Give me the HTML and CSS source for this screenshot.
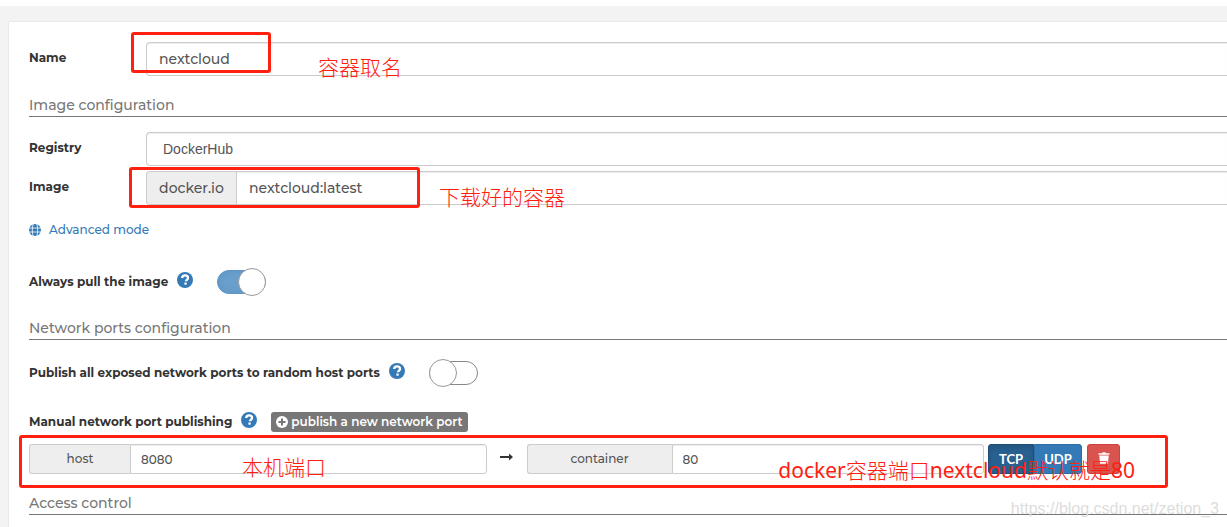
FILE: index.html
```html
<!DOCTYPE html>
<html lang="en">
  <head>
    <meta charset="UTF-8">
    <meta name="viewport" content="width=device-width, initial-scale=1">
    <title>Create container</title>
    <link rel="stylesheet" href="styles.css">
  </head>
  <body>
    <svg class="sprite" aria-hidden="true">
      <symbol id="icon-question" viewBox="0 0 16 16">
        <circle cx="8" cy="8" r="8" fill="currentColor"/>
        <path d="M5.2 6.1C5.2 4.3 6.4 3.4 8.1 3.4c1.7 0 2.9 1 2.9 2.5 0 2-2 2-2 3.4" fill="none" stroke="#fff" stroke-width="2.3"/>
        <path d="M7.4 10.500h2.300v2.200H7.400z" fill="#fff"/>
      </symbol>
    </svg>
    <main class="page">
      <form class="widget">
        <div class="form-row marked">
          <label for="name">Name</label>
          <input id="name" class="form-control" type="text" value="nextcloud">
          <span class="mark mark-name"></span>
          <span class="note note-name" lang="zh">容器取名</span>
        </div>

        <h2 class="form-section-title">Image configuration</h2>
        <div class="form-row registry">
          <label for="registry">Registry</label>
          <select id="registry" class="form-control">
            <option>DockerHub</option>
          </select>
        </div>
        <div class="form-row image marked">
          <label for="image">Image</label>
          <div class="input-group">
            <span class="addon">docker.io</span>
            <input id="image" class="form-control" type="text" value="nextcloud:latest">
          </div>
          <span class="mark mark-image"></span>
          <span class="note note-image" lang="zh">下载好的容器</span>
        </div>
        <a class="advanced" href="#">
          <svg width="12" height="12" viewBox="0 0 12 12" aria-hidden="true">
            <circle cx="6" cy="6" r="6" fill="currentColor"/>
            <path d="M0 4h12M0 8h12M4.2 0C3 3.600 3 8.400 4.200 12M7.800 0C9 3.600 9 8.400 7.800 12" fill="none" stroke="#fff" stroke-width=".8"/>
          </svg>
          Advanced mode
        </a>

        <div class="toggle-row pull">
          <label for="pull">Always pull the image</label>
          <svg class="help" aria-hidden="true"><use href="#icon-question"/></svg>
          <input id="pull" class="switch" type="checkbox" checked>
        </div>

        <h2 class="form-section-title network">Network ports configuration</h2>
        <div class="toggle-row publish">
          <label for="publish">Publish all exposed network ports to random host ports</label>
          <svg class="help" aria-hidden="true"><use href="#icon-question"/></svg>
          <input id="publish" class="switch" type="checkbox">
        </div>
        <div class="manual">
          <span class="manual-label">Manual network port publishing</span>
          <svg class="help" aria-hidden="true"><use href="#icon-question"/></svg>
          <button class="publish-port" type="button">
            <svg width="12" height="12" viewBox="0 0 12 12" aria-hidden="true">
              <circle cx="6" cy="6" r="6" fill="#fff"/>
              <path d="M6 2.500v7M2.500 6h7" stroke="#777" stroke-width="2"/>
            </svg>
            publish a new network port
          </button>
        </div>

        <div class="ports marked">
          <div class="input-group small host">
            <label class="addon" for="host">host</label>
            <input id="host" class="form-control" type="text" value="8080">
          </div>
          <svg class="arrow" viewBox="0 0 13 8" aria-hidden="true">
            <path d="M0 3h9V.5L13 4 9 7.500V5H0z" fill="#333"/>
          </svg>
          <div class="input-group small container">
            <label class="addon" for="container">container</label>
            <input id="container" class="form-control" type="text" value="80">
          </div>
          <div class="protocols">
            <button class="btn active" type="button">TCP</button>
            <button class="btn" type="button">UDP</button>
          </div>
          <button class="btn btn-danger" type="button" aria-label="Remove port">
            <svg width="12" height="12" viewBox="0 0 12 12" aria-hidden="true">
              <path d="M.5 1.200h3.700L4.600.2h2.800l.4 1h3.700v1.600H.5zM1.300 3.500h9.400L10 11.800H2z" fill="#fff"/>
            </svg>
          </button>
          <span class="mark mark-ports"></span>
          <span class="note note-host" lang="zh">本机端口</span>
          <span class="note note-container" lang="zh"><b>docker</b>容器端口<b>nextcloud</b>默认就是<b>80</b></span>
        </div>

        <h2 class="form-section-title">Access control</h2>
      </form>
      <span class="watermark">https://blog.csdn.net/zetion_3</span>
    </main>
  </body>
</html>
```
FILE: styles.css
```css
* {
  box-sizing: border-box;
}

body {
  margin: 0;
  background: #fff;
  color: #333;
  font: 500 12px/18px Montserrat, Inter, sans-serif;
}

input, select, button {
  font: inherit;
}

.sprite {
  position: absolute;
  width: 0;
  height: 0;
}

.page {
  position: relative;
  margin-top: 6px;
  padding: 15px 0 0 8px;
  min-height: calc(100vh - 6px);
  background: #f3f3f3;
  overflow: hidden;
}

/* The panel runs on past the right edge of the window */
.widget {
  min-height: calc(100vh - 21px);
  padding: 20px 0 0 20px;
  border: 1px solid #e9e9e9;
  border-right: 0;
  border-bottom: 0;
  border-radius: 2px 0 0 0;
  background: #fff;
}

.form-row {
  display: grid;
  grid-template-columns: 117px 1fr;
  align-items: start;
}
.form-row > label {
  padding-top: 7px;
}
label, .manual-label {
  font-weight: 700;
}

.form-control {
  width: 100%;
  height: 34px;
  padding: 0 12px;
  border: 1px solid #ccc;
  border-right: 0;
  border-radius: 4px 0 0 4px;
  background: #fff;
  color: #555;
  font-size: 14px;
  box-shadow: inset 0 1px 1px rgba(0, 0, 0, .075);
  appearance: none;
  outline: none;
}
select.form-control {
  padding-left: 16px;
  font-family: "Liberation Sans", Arial, sans-serif;
  font-weight: 400;
}

.input-group {
  display: flex;
  min-width: 0;
}
.input-group .form-control {
  flex: 1;
  min-width: 0;
  border-radius: 0;
}
.addon {
  flex: none;
  width: 90px;
  border: 1px solid #ccc;
  border-right: 0;
  border-radius: 4px 0 0 4px;
  background: #eee;
  color: #555;
  font-size: 14px;
  font-weight: 500;
  line-height: 32px;
  text-align: center;
}

.form-section-title {
  margin: 18px 0 15px;
  padding: 1px 0;
  border-bottom: 1px solid #777;
  color: #777;
  font-size: 14px;
  font-weight: 500;
  line-height: 20px;
}
.form-section-title.network {
  margin: 22px 0 20px;
}
.registry {
  margin-bottom: 5px;
}

.advanced {
  display: flex;
  align-items: center;
  gap: 8px;
  width: max-content;
  margin-top: 16px;
  color: #337ab7;
  text-decoration: none;
}

.toggle-row, .manual {
  display: flex;
  align-items: center;
}
.pull {
  margin-top: 30px;
}
.help {
  width: 16px;
  height: 16px;
  margin: 0 0 4px 9px;
  color: #337ab7;
}

.switch {
  appearance: none;
  display: flex;
  align-items: center;
  width: 49px;
  height: 24px;
  margin: 0 0 0 24px;
  border: 1px solid #888;
  border-radius: 12px;
  background: #fff;
}
.switch::before {
  content: "";
  flex: none;
  width: 26px;
  height: 26px;
  margin-left: -1px;
  border: 1px solid #999;
  border-radius: 50%;
  background: #fff;
}
.switch:checked {
  justify-content: flex-end;
  border-color: #5f96c4;
  background: #6a9fcb;
  box-shadow: inset 0 0 6px #5a93c5;
}
.switch:checked::before {
  margin-right: -1px;
}

.toggle-row {
  height: 26px;
}
.manual {
  height: 20px;
  margin: 26px 0 12px;
}
.publish-port {
  display: flex;
  align-items: center;
  gap: 3px;
  height: 20px;
  margin-left: 14px;
  padding: 0 5px;
  border: 0;
  border-radius: 3px;
  background: #777;
  color: #fff;
  font-weight: 600;
}

.ports {
  display: grid;
  grid-template-columns: 1fr 40px 1fr auto auto;
  padding-right: 107px;
}
.small .form-control {
  height: 30px;
  padding: 0 10px;
  border-right: 1px solid #ccc;
  border-radius: 0 3px 3px 0;
  font-size: 12px;
}
.small .addon {
  width: 101px;
  border-radius: 3px 0 0 3px;
  font-size: 12px;
  line-height: 28px;
}
.container .addon {
  width: 145px;
}
.arrow {
  width: 13px;
  height: 8px;
  margin-top: 9px;
  justify-self: center;
}
.protocols {
  display: flex;
  margin: 0 5px 0 4px;
}
.btn {
  width: 48px;
  height: 30px;
  padding: 0;
  border: 1px solid #2e6da4;
  border-radius: 0 3px 3px 0;
  background: #337ab7;
  color: #fff;
  font-family: Lato, sans-serif;
  font-size: 13px;
  font-weight: 700;
}
.btn.active {
  width: 46px;
  border-color: #204d74;
  border-radius: 3px 0 0 3px;
  background: #286090;
  box-shadow: inset 0 3px 5px rgba(0, 0, 0, .125);
}
.btn-danger {
  width: 33px;
  border-color: #d43f3a;
  border-radius: 3px;
  background: #d9534f;
}

/* Red frames and notes drawn over the form */
.marked {
  position: relative;
}
.mark {
  position: absolute;
  border: 3px solid #ff2010;
  border-radius: 3px;
  pointer-events: none;
}
.mark-name {
  left: 102px;
  top: -10px;
  width: 140px;
  height: 41px;
}
.mark-image {
  left: 100px;
  top: -4px;
  width: 291px;
  height: 41px;
}
.mark-ports {
  left: -10px;
  right: 59px;
  top: -9px;
  height: 53px;
}
.note {
  position: absolute;
  color: #ff2010;
  font: 300 21px/28px "Noto Sans", "Noto Sans CJK SC", sans-serif;
  white-space: nowrap;
  pointer-events: none;
}
.note b {
  font-weight: 400;
}
.note-name {
  left: 289px;
  top: 11px;
}
.note-image {
  left: 410px;
  top: 12px;
}
.note-host {
  left: 213px;
  top: 9px;
}
.note-container {
  right: 92px;
  top: 12px;
}

.watermark {
  position: absolute;
  right: 8px;
  bottom: 8px;
  color: #ddd;
  font: 16px/20px "Liberation Sans", Arial, sans-serif;
}
```
